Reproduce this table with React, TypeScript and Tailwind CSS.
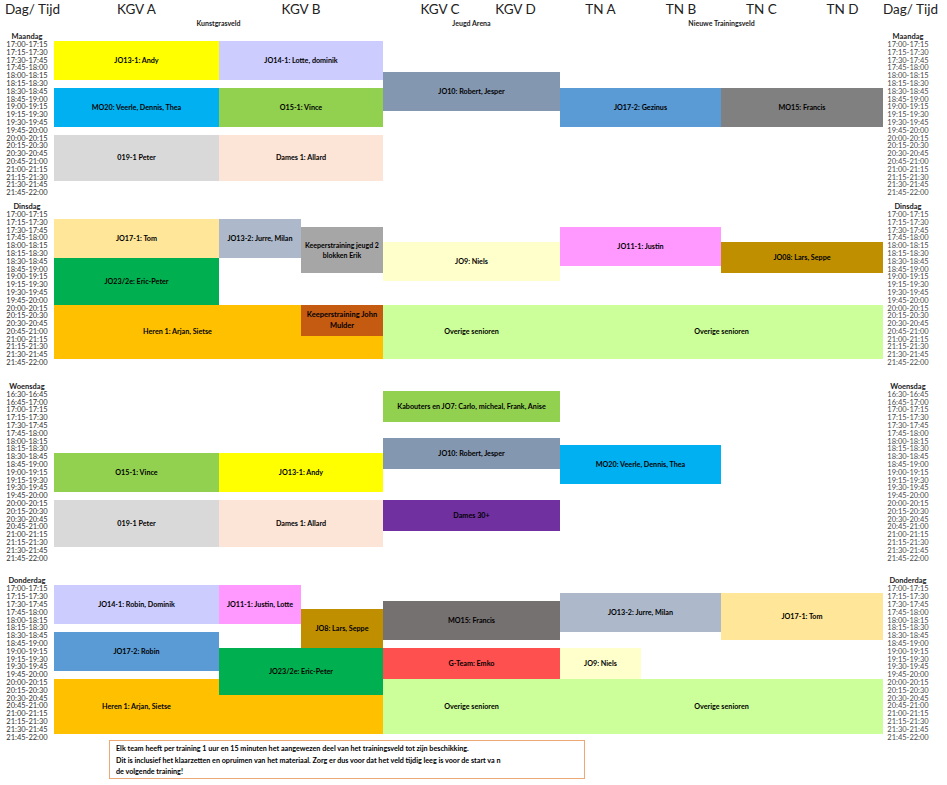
import React from "react";

type Block = { pos: string; bg: string; label?: string; text?: string };

type Day = {
  name: string;
  start: number; // minutes from midnight
  rows: string;
  gap: string;
  blocks: Block[];
};

const GRID =
  "grid grid-cols-[54px_82px_83px_82px_82px_88px_89px_81px_80px_81px_81px_64px]";

const BASE_TEXT = "text-[7.2px] leading-[9px]";

function pad(n: number) {
  return n.toString().padStart(2, "0");
}

function slots(start: number, end: number) {
  const out: string[] = [];
  for (let m = start; m < end; m += 15) {
    const a = `${pad(Math.floor(m / 60))}:${pad(m % 60)}`;
    const b = `${pad(Math.floor((m + 15) / 60))}:${pad((m + 15) % 60)}`;
    out.push(`${a}-${b}`);
  }
  return out;
}

const DAYS: Day[] = [
  {
    name: "Maandag",
    start: 17 * 60,
    rows: "grid-rows-[8px_repeat(20,7.8px)]",
    gap: "mt-0",
    blocks: [
      { pos: "col-start-2 col-end-4 row-start-2 row-end-7", bg: "bg-[#FFFF00]", label: "JO13-1: Andy" },
      { pos: "col-start-4 col-end-6 row-start-2 row-end-7", bg: "bg-[#CCCCFF]", label: "JO14-1: Lotte, dominik" },
      { pos: "col-start-6 col-end-8 row-start-6 row-end-11", bg: "bg-[#8497B0]", label: "JO10: Robert, Jesper" },
      { pos: "col-start-2 col-end-4 row-start-8 row-end-13", bg: "bg-[#00B0F0]", label: "MO20: Veerle, Dennis, Thea" },
      { pos: "col-start-4 col-end-6 row-start-8 row-end-13", bg: "bg-[#92D050]", label: "O15-1: Vince" },
      { pos: "col-start-8 col-end-10 row-start-8 row-end-13", bg: "bg-[#5B9BD5]", label: "JO17-2: Gezinus" },
      { pos: "col-start-10 col-end-12 row-start-8 row-end-13", bg: "bg-[#808080]", label: "MO15: Francis" },
      { pos: "col-start-2 col-end-4 row-start-14 row-end-20", bg: "bg-[#D9D9D9]", label: "019-1 Peter" },
      { pos: "col-start-4 col-end-6 row-start-14 row-end-20", bg: "bg-[#FCE4D6]", label: "Dames 1: Allard" },
    ],
  },
  {
    name: "Dinsdag",
    start: 17 * 60,
    rows: "grid-rows-[8px_repeat(20,7.8px)]",
    gap: "mt-[6px]",
    blocks: [
      { pos: "col-start-2 col-end-4 row-start-3 row-end-8", bg: "bg-[#FFE699]", label: "JO17-1: Tom" },
      { pos: "col-start-4 col-end-5 row-start-3 row-end-8", bg: "bg-[#ADB9CA]", label: "JO13-2: Jurre, Milan" },
      { pos: "col-start-5 col-end-6 row-start-4 row-end-10", bg: "bg-[#A6A6A6]", label: "Keeperstraining jeugd 2 blokken Erik", text: "text-[7px] leading-[10px]" },
      { pos: "col-start-6 col-end-8 row-start-6 row-end-11", bg: "bg-[#FFFFCC]", label: "JO9: Niels" },
      { pos: "col-start-8 col-end-10 row-start-4 row-end-9", bg: "bg-[#FF99FF]", label: "JO11-1: Justin" },
      { pos: "col-start-10 col-end-12 row-start-6 row-end-10", bg: "bg-[#BF8F00]", label: "JO08: Lars, Seppe" },
      { pos: "col-start-2 col-end-4 row-start-8 row-end-14", bg: "bg-[#00B050]", label: "JO23/2e: Eric-Peter" },
      { pos: "col-start-2 col-end-5 row-start-14 row-end-21", bg: "bg-[#FFC000]", label: "Heren 1: Arjan, Sietse" },
      { pos: "col-start-5 col-end-6 row-start-18 row-end-21", bg: "bg-[#FFC000]" },
      { pos: "col-start-5 col-end-6 row-start-14 row-end-18", bg: "bg-[#C55A11]", label: "Keeperstraining John Mulder", text: "text-[7.5px] leading-[11px]" },
      { pos: "col-start-6 col-end-8 row-start-14 row-end-21", bg: "bg-[#CCFF99]", label: "Overige senioren" },
      { pos: "col-start-8 col-end-12 row-start-14 row-end-21", bg: "bg-[#CCFF99]", label: "Overige senioren" },
    ],
  },
  {
    name: "Woensdag",
    start: 16 * 60 + 30,
    rows: "grid-rows-[8px_repeat(22,7.8px)]",
    gap: "mt-[16px]",
    blocks: [
      { pos: "col-start-6 col-end-8 row-start-2 row-end-6", bg: "bg-[#92D050]", label: "Kabouters en JO7: Carlo, micheal, Frank, Anise" },
      { pos: "col-start-6 col-end-8 row-start-8 row-end-12", bg: "bg-[#8497B0]", label: "JO10: Robert, Jesper" },
      { pos: "col-start-8 col-end-10 row-start-9 row-end-14", bg: "bg-[#00B0F0]", label: "MO20: Veerle, Dennis, Thea" },
      { pos: "col-start-2 col-end-4 row-start-10 row-end-15", bg: "bg-[#92D050]", label: "O15-1: Vince" },
      { pos: "col-start-4 col-end-6 row-start-10 row-end-15", bg: "bg-[#FFFF00]", label: "JO13-1: Andy" },
      { pos: "col-start-2 col-end-4 row-start-16 row-end-22", bg: "bg-[#D9D9D9]", label: "019-1 Peter" },
      { pos: "col-start-4 col-end-6 row-start-16 row-end-22", bg: "bg-[#FCE4D6]", label: "Dames 1: Allard" },
      { pos: "col-start-6 col-end-8 row-start-16 row-end-20", bg: "bg-[#7030A0]", label: "Dames 30+" },
    ],
  },
  {
    name: "Donderdag",
    start: 17 * 60,
    rows: "grid-rows-[8px_repeat(20,7.8px)]",
    gap: "mt-[15px]",
    blocks: [
      { pos: "col-start-2 col-end-4 row-start-2 row-end-7", bg: "bg-[#CCCCFF]", label: "JO14-1: Robin, Dominik" },
      { pos: "col-start-4 col-end-5 row-start-2 row-end-7", bg: "bg-[#FF99FF]", label: "JO11-1: Justin, Lotte" },
      { pos: "col-start-5 col-end-6 row-start-5 row-end-10", bg: "bg-[#BF8F00]", label: "JO8: Lars, Seppe" },
      { pos: "col-start-6 col-end-8 row-start-4 row-end-9", bg: "bg-[#767171]", label: "MO15: Francis" },
      { pos: "col-start-8 col-end-10 row-start-3 row-end-8", bg: "bg-[#ADB9CA]", label: "JO13-2: Jurre, Milan" },
      { pos: "col-start-10 col-end-12 row-start-3 row-end-9", bg: "bg-[#FFE699]", label: "JO17-1: Tom" },
      { pos: "col-start-2 col-end-4 row-start-8 row-end-13", bg: "bg-[#5B9BD5]", label: "JO17-2: Robin" },
      { pos: "col-start-4 col-end-6 row-start-10 row-end-16", bg: "bg-[#00B050]", label: "JO23/2e: Eric-Peter" },
      { pos: "col-start-6 col-end-8 row-start-10 row-end-14", bg: "bg-[#FF5050]", label: "G-Team: Emko" },
      { pos: "col-start-8 col-end-9 row-start-10 row-end-14", bg: "bg-[#FFFFCC]", label: "JO9: Niels" },
      { pos: "col-start-2 col-end-4 row-start-14 row-end-21", bg: "bg-[#FFC000]", label: "Heren 1: Arjan, Sietse" },
      { pos: "col-start-4 col-end-6 row-start-16 row-end-21", bg: "bg-[#FFC000]" },
      { pos: "col-start-6 col-end-8 row-start-14 row-end-21", bg: "bg-[#CCFF99]", label: "Overige senioren" },
      { pos: "col-start-8 col-end-12 row-start-14 row-end-21", bg: "bg-[#CCFF99]", label: "Overige senioren" },
    ],
  },
];

function TimeColumn({ day, times, side }: { day: string; times: string[]; side: "left" | "right" }) {
  return (
    <div
      className={
        side === "left"
          ? "col-start-1 row-span-full flex flex-col items-center text-[#333]"
          : "col-start-12 row-span-full flex flex-col items-center pl-[4px] pr-[18px] text-[#4a4a4a]"
      }
    >
      <div className="h-[8px] text-[7.5px] font-bold leading-[8px] text-[#1a1a1a]">{day}</div>
      {times.map((t) => (
        <div key={t} className="h-[7.8px] whitespace-nowrap text-[7.5px] leading-[7.8px]">
          {t}
        </div>
      ))}
    </div>
  );
}

function DaySection({ day }: { day: Day }) {
  const times = slots(day.start, 22 * 60);
  return (
    <div className={`${GRID} ${day.rows} ${day.gap}`}>
      <TimeColumn day={day.name} times={times} side="left" />
      {day.blocks.map((b, i) => (
        <div
          key={i}
          className={`${b.pos} ${b.bg} flex items-center justify-center px-[3px] text-center font-bold text-black ${b.text ?? BASE_TEXT}`}
        >
          {b.label}
        </div>
      ))}
      <TimeColumn day={day.name} times={times} side="right" />
    </div>
  );
}

function Header() {
  return (
    <div className={`${GRID} h-[33px] grid-rows-[18px_10px] text-[#222]`}>
      <div className="col-start-1 row-start-1 flex items-center pl-[5px] text-[13.5px] whitespace-nowrap">Dag/ Tijd</div>
      <div className="col-start-2 col-end-4 row-start-1 flex items-center justify-center text-[13.5px]">KGV A</div>
      <div className="col-start-4 col-end-6 row-start-1 flex items-center justify-center text-[13.5px]">KGV B</div>
      <div className="col-start-6 row-start-1 flex items-center justify-center pl-[26px] text-[13.5px] whitespace-nowrap">KGV C</div>
      <div className="col-start-7 row-start-1 flex items-center justify-center text-[13.5px] whitespace-nowrap">KGV D</div>
      <div className="col-start-8 row-start-1 flex items-center justify-center text-[13.5px] whitespace-nowrap">TN A</div>
      <div className="col-start-9 row-start-1 flex items-center justify-center text-[13.5px] whitespace-nowrap">TN B</div>
      <div className="col-start-10 row-start-1 flex items-center justify-center text-[13.5px] whitespace-nowrap">TN C</div>
      <div className="col-start-11 row-start-1 flex items-center justify-center text-[13.5px] whitespace-nowrap">TN D</div>
      <div className="col-start-12 row-start-1 flex items-center text-[13.5px] whitespace-nowrap">Dag/ Tijd</div>

      <div className="col-start-2 col-end-6 row-start-2 flex items-center justify-center text-[7px] font-bold">Kunstgrasveld</div>
      <div className="col-start-6 col-end-8 row-start-2 flex items-center justify-center text-[7px] font-bold">Jeugd Arena</div>
      <div className="col-start-8 col-end-12 row-start-2 flex items-center justify-center text-[7px] font-bold">Nieuwe Trainingsveld</div>
    </div>
  );
}

export default function App() {
  return (
    <div className="relative h-[785px] w-[947px] overflow-hidden bg-white font-['Lato',sans-serif] text-[#1f1f1f]">
      <Header />
      {DAYS.map((d) => (
        <DaySection key={d.name} day={d} />
      ))}

      {/* opmerking onderaan */}
      <div className="-mt-px ml-[109px] h-[39px] w-[476px] border border-[#EDA878] pl-[6px] pt-[2px] text-[7.2px] font-bold leading-[11.3px] text-black">
        <p>Elk team heeft per training 1 uur en 15 minuten het aangewezen deel van het trainingsveld tot zijn beschikking.</p>
        <p>Dit is inclusief het klaarzetten en opruimen van het materiaal. Zorg er dus voor dat het veld tijdig leeg is voor de start va n</p>
        <p>de volgende training!</p>
      </div>
    </div>
  );
}
